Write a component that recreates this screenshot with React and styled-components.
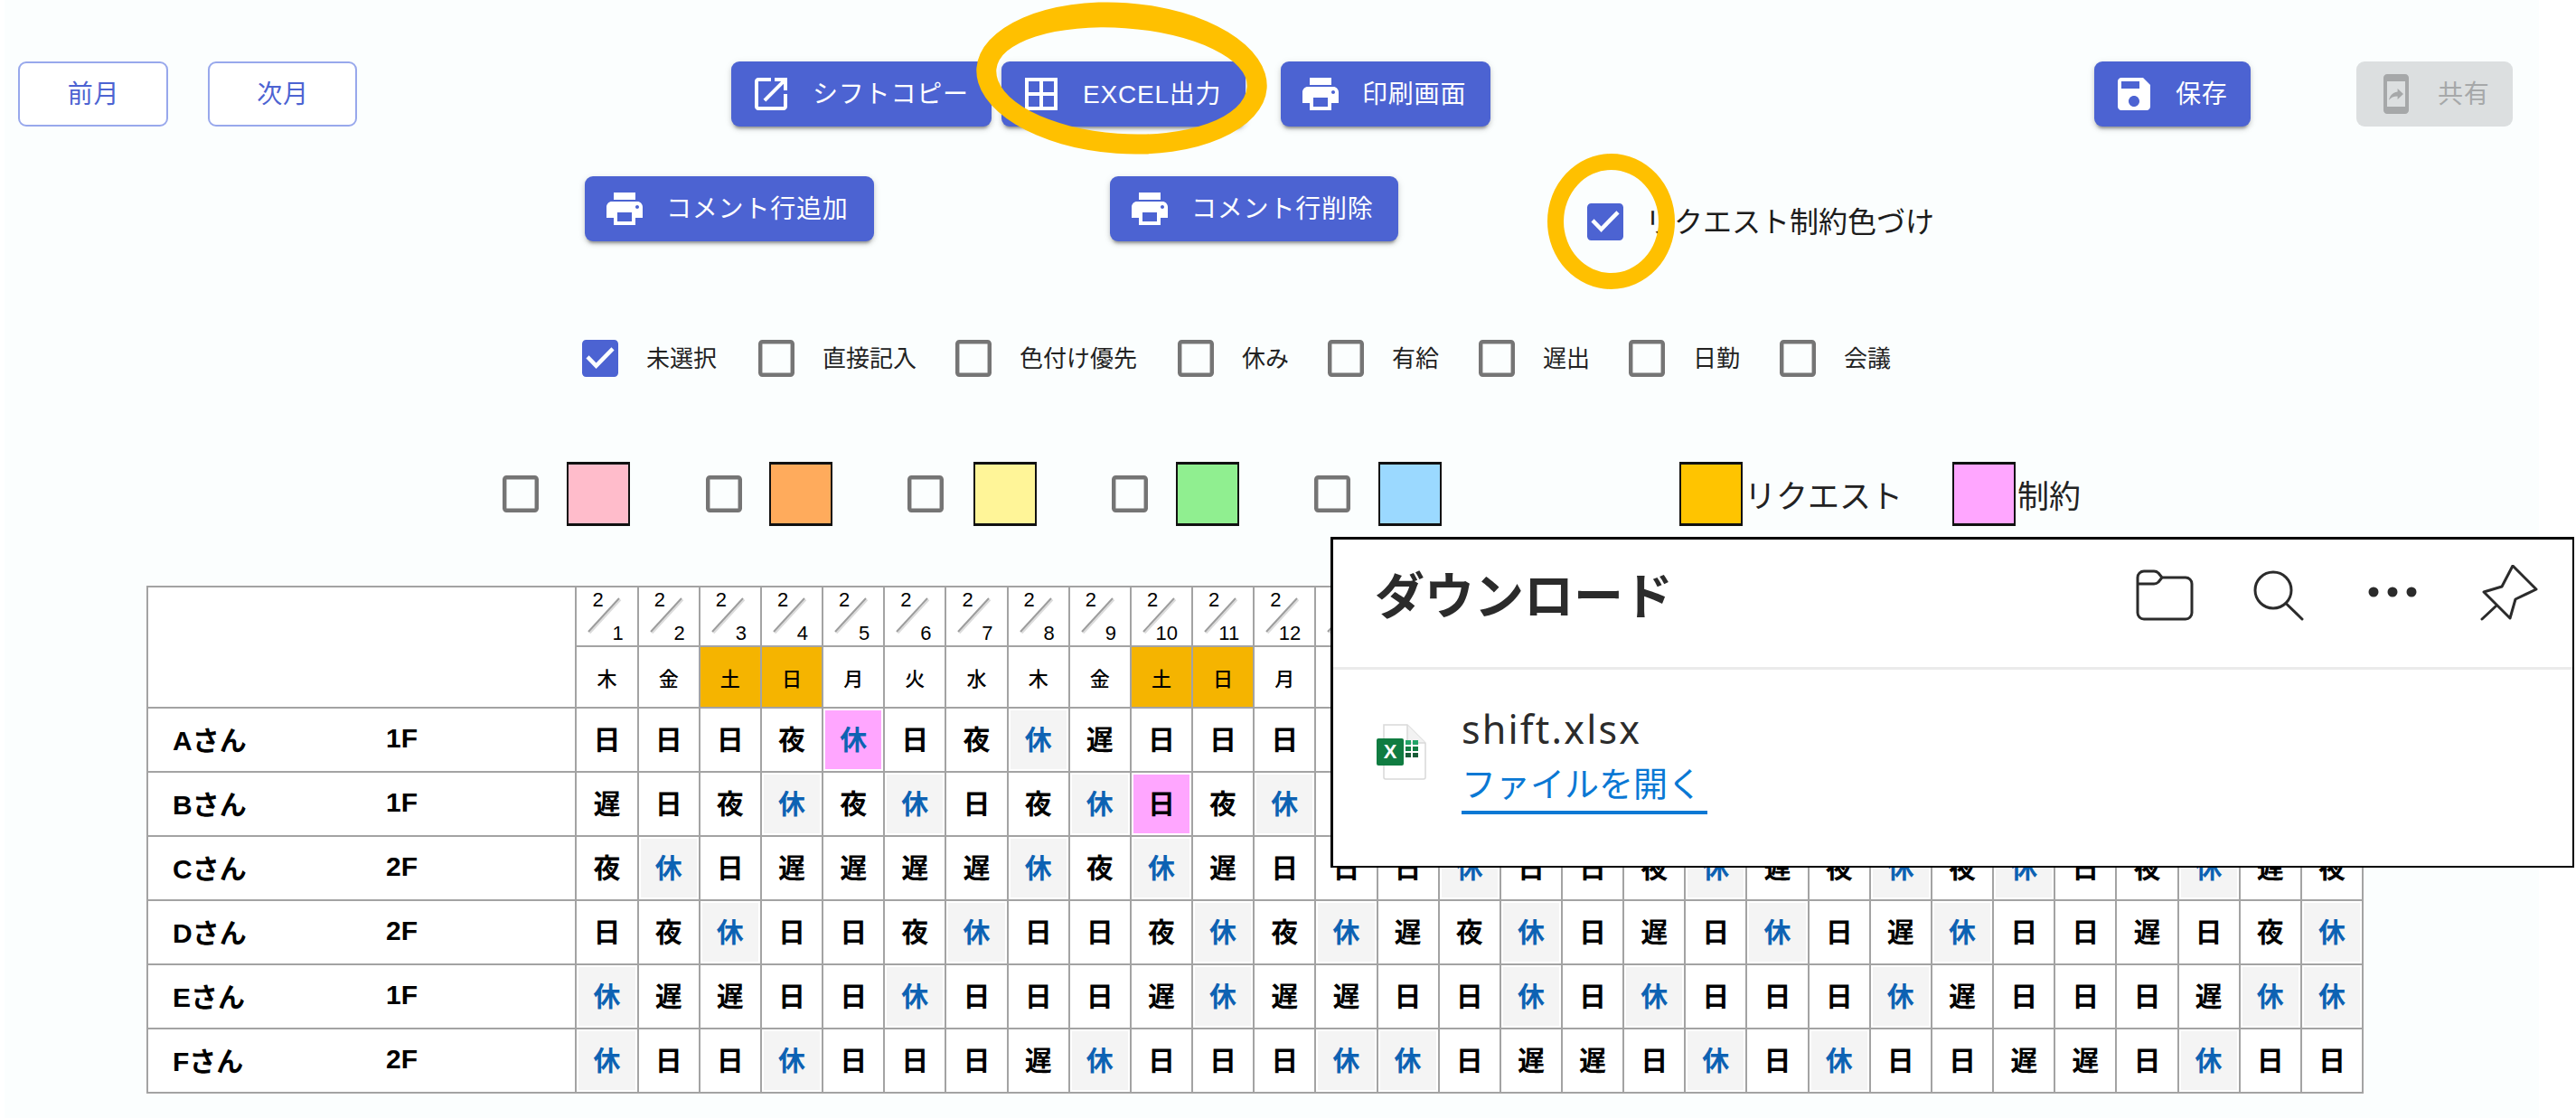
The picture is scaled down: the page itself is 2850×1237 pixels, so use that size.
import React from 'react';
import styled, { createGlobalStyle } from 'styled-components';

const Global = createGlobalStyle`
  html, body { margin: 0; padding: 0; background: #fff; }
  body { font-family: "Noto Sans CJK JP", "Noto Sans", sans-serif; overflow: hidden; }
`;

const UI_FONT = `"Liberation Sans", "Noto Sans CJK JP", sans-serif`;
const TABLE_FONT = `"Liberation Sans", "Noto Sans CJK JP", sans-serif`;
const BLUE = '#4c63d2';

const Page = styled.div`
  position: relative;
  margin-left: 5px;
  width: 2804px;
  height: 1237px;
  padding-top: 68px;
  box-sizing: border-box;
  background: #fbfefe;
`;
const Row = styled.div`
  display: flex;
  align-items: flex-start;
  margin-top: ${p => p.$top || 0}px;
  padding-left: ${p => p.$left || 0}px;
`;
const OutlineButton = styled.button`
  width: ${p => p.$w}px;
  height: 72px;
  margin-left: ${p => p.$ml || 0}px;
  box-sizing: border-box;
  border: 2px solid #98a8ec;
  border-radius: 9px;
  background: #fff;
  color: ${BLUE};
  font: 400 28px ${UI_FONT};
  letter-spacing: .8px;
  padding: 0 0 4px 1px;
`;
const ActionButton = styled.button`
  display: flex;
  align-items: center;
  gap: 22px;
  width: ${p => p.$w}px;
  height: 72px;
  margin-left: ${p => p.$ml || 0}px;
  padding: 0 0 0 20px;
  box-sizing: border-box;
  border: 0;
  border-radius: 9px;
  background: ${p => (p.$disabled ? '#dcdfe0' : BLUE)};
  color: ${p => (p.$disabled ? '#a6a8a9' : '#fff')};
  font: 400 28px ${UI_FONT};
  letter-spacing: .8px;
  white-space: nowrap;
  box-shadow: ${p => (p.$disabled ? 'none' : '0 5px 3px -3px rgba(0,0,0,.28), 0 3px 5px 0 rgba(0,0,0,.14), 0 2px 9px 0 rgba(0,0,0,.1)')};
`;
const ButtonLabel = styled.span`
  padding-bottom: 4px;
`;
const ButtonIcon = styled.svg`
  width: 48px;
  height: 48px;
  flex: none;
  fill: currentColor;
`;
const CheckGlyph = styled.svg`
  display: block;
  width: 40px;
  height: 41px;
  flex: none;
  margin-left: ${p => p.$ml || 0}px;
  margin-top: ${p => p.$mt || 0}px;
  fill: ${p => (p.$on ? BLUE : '#757575')};
`;
const BigLabel = styled.span`
  margin-left: ${p => p.$ml || 0}px;
  margin-top: ${p => p.$mt || 0}px;
  font-size: 32px;
  line-height: 48px;
  color: #1c1c1c;
  white-space: nowrap;
`;
const Option = styled.label`
  display: flex;
  align-items: center;
  gap: 31px;
  height: 41px;
  margin-right: ${p => p.$mr}px;
  font-size: 26px;
  color: #222;
  white-space: nowrap;
`;
const OptionText = styled.span`
  padding-bottom: 4px;
`;
const ColorGroup = styled.div`
  display: flex;
  align-items: center;
  gap: ${p => p.$gap}px;
  margin-right: ${p => p.$mr}px;
`;
const Swatch = styled.span`
  display: block;
  width: 70px;
  height: 71px;
  box-sizing: border-box;
  border: 2px solid #111;
  border-top-width: 3px;
  border-bottom-width: 3px;
  background: ${p => p.$color};
  flex: none;
`;
const Legend = styled.div`
  display: flex;
  align-items: center;
  margin-right: ${p => p.$mr || 0}px;
  font-size: 35px;
  color: #222;
`;
const LegendText = styled.span`
  margin-left: 2px;
  white-space: nowrap;
`;

const Table = styled.table`
  margin: 66px 0 0 157px;
  width: 2453px;
  table-layout: fixed;
  border-collapse: collapse;
  background: #fff;
  font-family: ${TABLE_FONT};
  color: #000;
  td { border: 2px solid #a3a3a3; padding: 0; }
`;
const DateRow = styled.tr` height: 66px; `;
const WeekRow = styled.tr` height: 68px; `;
const BodyRow = styled.tr` height: 71px; `;
const DateCell = styled.td`
  position: relative;
`;
const DateInner = styled.div`
  display: flex;
  flex-direction: column;
  justify-content: space-between;
  height: 62px;
  padding: 1px 15px 1px 17px;
  font-size: 22px;
  line-height: 25px;
`;
const Month = styled.span` align-self: flex-start; `;
const Day = styled.span` align-self: flex-end; `;
const Diagonal = styled.svg`
  position: absolute;
  left: 0;
  top: 0;
  width: 68px;
  height: 64px;
`;
const WeekCell = styled.td`
  text-align: center;
  font-size: 22px;
  font-weight: 500;
  background: ${p => (p.$weekend ? '#f5b400' : '#fff')};
`;
const NameCell = styled.td`
  font-size: 30px;
  font-weight: 700;
`;
const NameInner = styled.div`
  display: flex;
  align-items: center;
  padding: 0 0 3px 27px;
`;
const NameText = styled.span` width: 236px; `;
const ShiftCell = styled.td`
  text-align: center;
  font-size: 30px;
  font-weight: 700;
  line-height: 1;
  color: ${p => (p.$off ? '#0d62b3' : '#000')};
  background: ${p => (p.$pink ? '#ffa6ff' : p.$off ? '#f4f4f4' : '#fff')};
  box-shadow: ${p => (p.$off || p.$pink ? 'inset 0 0 0 2px #fff' : 'none')};
`;

const Ring = styled.div`
  position: absolute;
  left: ${p => p.$x}px;
  top: ${p => p.$y}px;
  width: ${p => p.$w}px;
  height: ${p => p.$h}px;
  box-sizing: border-box;
  border: ${p => p.$stroke || 18}px solid #ffc000;
  border-top-width: ${p => p.$topW || 18}px;
  border-radius: 50%;
  transform: rotate(${p => p.$tilt || 0}deg);
`;

const Popup = styled.div`
  position: absolute;
  left: 1467px;
  top: 594px;
  width: 1376px;
  height: 366px;
  box-sizing: border-box;
  background: #fff;
  border: solid #000;
  border-width: 3px 2px 2px 3px;
  color: #2b2b2b;
`;
const PopupHeader = styled.div`
  display: flex;
  align-items: flex-start;
  height: 144px;
  box-sizing: border-box;
  padding-top: 28px;
  border-bottom: 3px solid #ebebeb;
`;
const PopupTitle = styled.h2`
  margin: 0 0 0 46px;
  font-size: 55px;
  font-weight: 700;
  line-height: 60px;
  flex: 1;
  letter-spacing: 0;
`;
const HeaderIcon = styled.svg`
  flex: none;
  height: 64px;
  width: ${p => p.$w}px;
  margin-right: ${p => p.$mr}px;
  fill: none;
  stroke: #2b2b2b;
  stroke-width: 3;
  stroke-linejoin: round;
  stroke-linecap: round;
`;
const FileRow = styled.div`
  display: flex;
  align-items: flex-start;
  padding: 60px 0 0 48px;
`;
const FileIcon = styled.svg`
  width: 56px;
  height: 62px;
  flex: none;
  margin-right: 38px;
`;
const FileText = styled.div`
  display: flex;
  flex-direction: column;
  margin-top: -20px;
`;
const FileName = styled.span`
  font: 400 43px/52px "Noto Sans", sans-serif;
  letter-spacing: 2.2px;
  color: #2b2b2b;
`;
const OpenLink = styled.a`
  display: inline-block;
  align-self: flex-start;
  margin-top: 2px;
  font-size: 38px;
  line-height: 60px;
  color: #0a78d4;
  border-bottom: 4px solid #0a78d4;
  padding: 0 6px 2px 0;
`;

const P = {
  open: 'M19 19H5V5h7V3H5c-1.11 0-2 .9-2 2v14c0 1.1.89 2 2 2h14c1.1 0 2-.9 2-2v-7h-2v7zM14 3v2h3.59l-9.83 9.83 1.41 1.41L19 6.41V10h2V3h-7z',
  grid: 'M3 3v18h18V3H3zm8 16H5v-6h6v6zm0-8H5V5h6v6zm8 8h-6v-6h6v6zm0-8h-6V5h6v6z',
  print: 'M19 8H5c-1.66 0-3 1.34-3 3v6h4v4h12v-4h4v-6c0-1.66-1.34-3-3-3zm-3 11H8v-5h8v5zm3-7c-.55 0-1-.45-1-1s.45-1 1-1 1 .45 1 1-.45 1-1 1zm-1-9H6v4h12V3z',
  save: 'M17 3H5c-1.11 0-2 .9-2 2v14c0 1.1.89 2 2 2h14c1.1 0 2-.9 2-2V7l-4-4zm-5 16c-1.66 0-3-1.34-3-3s1.34-3 3-3 3 1.34 3 3-1.34 3-3 3zm3-10H5V5h10v4z',
  share: 'M17 1.01 7 1c-1.1 0-2 .9-2 2v18c0 1.1.9 2 2 2h10c1.1 0 2-.9 2-2V3c0-1.1-.9-1.99-2-1.99zM17 19H7V5h10v14zm-4.2-5.76v1.75L16 12l-3.2-2.98v1.7c-3.11.43-4.35 2.56-4.8 4.7 1.11-1.5 2.58-2.18 4.8-2.18z',
  checked: 'M19 3H5c-1.11 0-2 .9-2 2v14c0 1.1.89 2 2 2h14c1.1 0 2-.9 2-2V5c0-1.1-.9-2-2-2zm-9 14l-5-5 1.41-1.41L10 14.17l7.59-7.59L19 8l-9 9z',
  empty: 'M19 5v14H5V5h14m0-2H5c-1.1 0-2 .9-2 2v14c0 1.1.9 2 2 2h14c1.1 0 2-.9 2-2V5c0-1.1-.9-2-2-2z',
};

const Icon = ({ d }) => (
  <ButtonIcon viewBox="0 0 24 24"><path d={d} /></ButtonIcon>
);
const Check = ({ on, ml, mt }) => (
  <CheckGlyph $on={on} $ml={ml} $mt={mt} viewBox="3 3 18 18" preserveAspectRatio="none">
    <path d={on ? P.checked : P.empty} />
  </CheckGlyph>
);

const OPTIONS = [
  ['未選択', true, 46], ['直接記入', false, 43], ['色付け優先', false, 45], ['休み', false, 43],
  ['有給', false, 44], ['遅出', false, 43], ['日勤', false, 44], ['会議', false, 0],
];
const COLORS = [
  ['#ffbccb', 31, 84], ['#ffab5c', 30, 83], ['#fff598', 33, 83], ['#90ef90', 31, 83], ['#9bd9ff', 31, 263],
];

const WEEK = ['木', '金', '土', '日', '月', '火', '水'];
const days = Array.from({ length: 29 }, (_, i) => i + 1);
const LAST_SEEN_DAY = 13;
const ROWS = [
  ['Aさん', '1F', '日日日夜休日夜休遅日日日日', [5]],
  ['Bさん', '1F', '遅日夜休夜休日夜休日夜休日', [10]],
  ['Cさん', '2F', '夜休日遅遅遅遅休夜休遅日日日休日日夜休遅夜休夜休日夜休遅夜', []],
  ['Dさん', '2F', '日夜休日日夜休日日夜休夜休遅夜休日遅日休日遅休日日遅日夜休', []],
  ['Eさん', '1F', '休遅遅日日休日日日遅休遅遅日日休日休日日日休遅日日日遅休休', []],
  ['Fさん', '2F', '休日日休日日日遅休日日日休休日遅遅日休日休日日遅遅日休日日', []],
];

const DIAG = 'M13 49 L47 12';

export default function App() {
  return (
    <Page>
      <Global />
      <Row $left={15}>
        <OutlineButton $w={166}>前月</OutlineButton>
        <OutlineButton $w={165} $ml={44}>次月</OutlineButton>
        <ActionButton $w={288} $ml={414}><Icon d={P.open} /><ButtonLabel>シフトコピー</ButtonLabel></ActionButton>
        <ActionButton $w={270} $ml={11}><Icon d={P.grid} /><ButtonLabel>EXCEL出力</ButtonLabel></ActionButton>
        <ActionButton $w={232} $ml={39}><Icon d={P.print} /><ButtonLabel>印刷画面</ButtonLabel></ActionButton>
        <ActionButton $w={173} $ml={668}><Icon d={P.save} /><ButtonLabel>保存</ButtonLabel></ActionButton>
        <ActionButton $w={173} $ml={117} $disabled><Icon d={P.share} /><ButtonLabel>共有</ButtonLabel></ActionButton>
      </Row>
      <Row $left={642} $top={55}>
        <ActionButton $w={320}><Icon d={P.print} /><ButtonLabel>コメント行追加</ButtonLabel></ActionButton>
        <ActionButton $w={319} $ml={261}><Icon d={P.print} /><ButtonLabel>コメント行削除</ButtonLabel></ActionButton>
        <Check on ml={209} mt={30} />
        <BigLabel $ml={24} $mt={24}>リクエスト制約色づけ</BigLabel>
      </Row>
      <Row $left={639} $top={109}>
        {OPTIONS.map(([label, on, mr]) => (
          <Option key={label} $mr={mr}>
            <Check on={on} />
            <OptionText>{label}</OptionText>
          </Option>
        ))}
      </Row>
      <Row $left={551} $top={94}>
        {COLORS.map(([c, gap, mr]) => (
          <ColorGroup key={c} $gap={gap} $mr={mr}>
            <Check />
            <Swatch $color={c} />
          </ColorGroup>
        ))}
        <Legend $mr={55}>
          <Swatch $color="#ffc400" />
          <LegendText>リクエスト</LegendText>
        </Legend>
        <Legend>
          <Swatch $color="#ffa6ff" />
          <LegendText>制約</LegendText>
        </Legend>
      </Row>
      <Table>
        <colgroup>
          <col />
          {days.map(d => <col key={d} style={{ width: '68.17px' }} />)}
        </colgroup>
        <tbody>
          <DateRow>
            <td rowSpan={2} />
            {days.map(d => (
              <DateCell key={d}>
                {d <= LAST_SEEN_DAY && (
                  <>
                    <DateInner>
                      <Month>2</Month>
                      <Day>{d}</Day>
                    </DateInner>
                    <Diagonal viewBox="0 0 68 64">
                      <path d={DIAG} transform="translate(1.5 1.5)" stroke="#dcdcdc" strokeWidth="2" fill="none" />
                      <path d={DIAG} stroke="#9c9c9c" strokeWidth="2" fill="none" />
                    </Diagonal>
                  </>
                )}
              </DateCell>
            ))}
          </DateRow>
          <WeekRow>
            {days.map(d => {
              const w = WEEK[(d - 1) % 7];
              return (
                <WeekCell key={d} $weekend={w === '土' || w === '日'}>
                  {d <= LAST_SEEN_DAY ? w : ''}
                </WeekCell>
              );
            })}
          </WeekRow>
          {ROWS.map(([name, floor, shifts, pink]) => (
            <BodyRow key={name}>
              <NameCell>
                <NameInner>
                  <NameText>{name}</NameText>
                  <span>{floor}</span>
                </NameInner>
              </NameCell>
              {days.map(d => {
                const s = Array.from(shifts)[d - 1] || '';
                return <ShiftCell key={d} $off={s === '休'} $pink={pink.includes(d)}>{s}</ShiftCell>;
              })}
            </BodyRow>
          ))}
        </tbody>
      </Table>

      <Ring $x={1075} $y={3} $w={322} $h={167} $stroke={22} $topW={28} $tilt={4} />
      <Ring $x={1707} $y={170} $w={141} $h={150} />

      <Popup>
        <PopupHeader>
          <PopupTitle>ダウンロード</PopupTitle>
          <HeaderIcon $w={66} $mr={64} viewBox="0 0 66 64">
            <path d="M3 14a7 7 0 0 1 7-7h11a7 7 0 0 1 5 2l4 5h26a7 7 0 0 1 7 7v32a7 7 0 0 1-7 7H10a7 7 0 0 1-7-7zM3 21h18a7 7 0 0 0 5-2l4-5" />
          </HeaderIcon>
          <HeaderIcon $w={58} $mr={69} viewBox="0 0 58 64">
            <circle cx="23" cy="28" r="20" />
            <path d="M37 42.5 55 60" />
          </HeaderIcon>
          <HeaderIcon $w={56} $mr={69} viewBox="0 0 56 64">
            <circle cx="7" cy="30" r="4" fill="#2b2b2b" />
            <circle cx="28" cy="30" r="4" fill="#2b2b2b" />
            <circle cx="49" cy="30" r="4" fill="#2b2b2b" />
          </HeaderIcon>
          <HeaderIcon $w={64} $mr={38} viewBox="0 0 64 64">
            <path d="M36 1 62 27 39 38 33 59 4 30 24 24ZM17 46 2 60" />
          </HeaderIcon>
        </PopupHeader>
        <FileRow>
          <FileIcon viewBox="0 0 56 62">
            <path d="M8 1H34L54 21V59a2 2 0 0 1-2 2H10a2 2 0 0 1-2-2Z" fill="#fff" stroke="#d9d9d9" strokeWidth="1.5" />
            <path d="M34 1V21H54" fill="#f2f2f2" stroke="#d9d9d9" strokeWidth="1.5" />
            <rect x="0" y="16" width="30" height="30" rx="2" fill="#107c41" />
            <text x="15" y="38" textAnchor="middle" fontFamily="Liberation Sans, sans-serif" fontSize="22" fontWeight="700" fill="#fff">X</text>
            <path d="M32 18h6v5h-6zM40 18h6v5h-6z" fill="#21a366" />
            <path d="M32 25h6v5h-6zM40 25h6v5h-6z" fill="#107c41" />
            <path d="M32 32h6v5h-6zM40 32h6v5h-6z" fill="#185c37" />
          </FileIcon>
          <FileText>
            <FileName>shift.xlsx</FileName>
            <OpenLink>ファイルを開く</OpenLink>
          </FileText>
        </FileRow>
      </Popup>
    </Page>
  );
}
